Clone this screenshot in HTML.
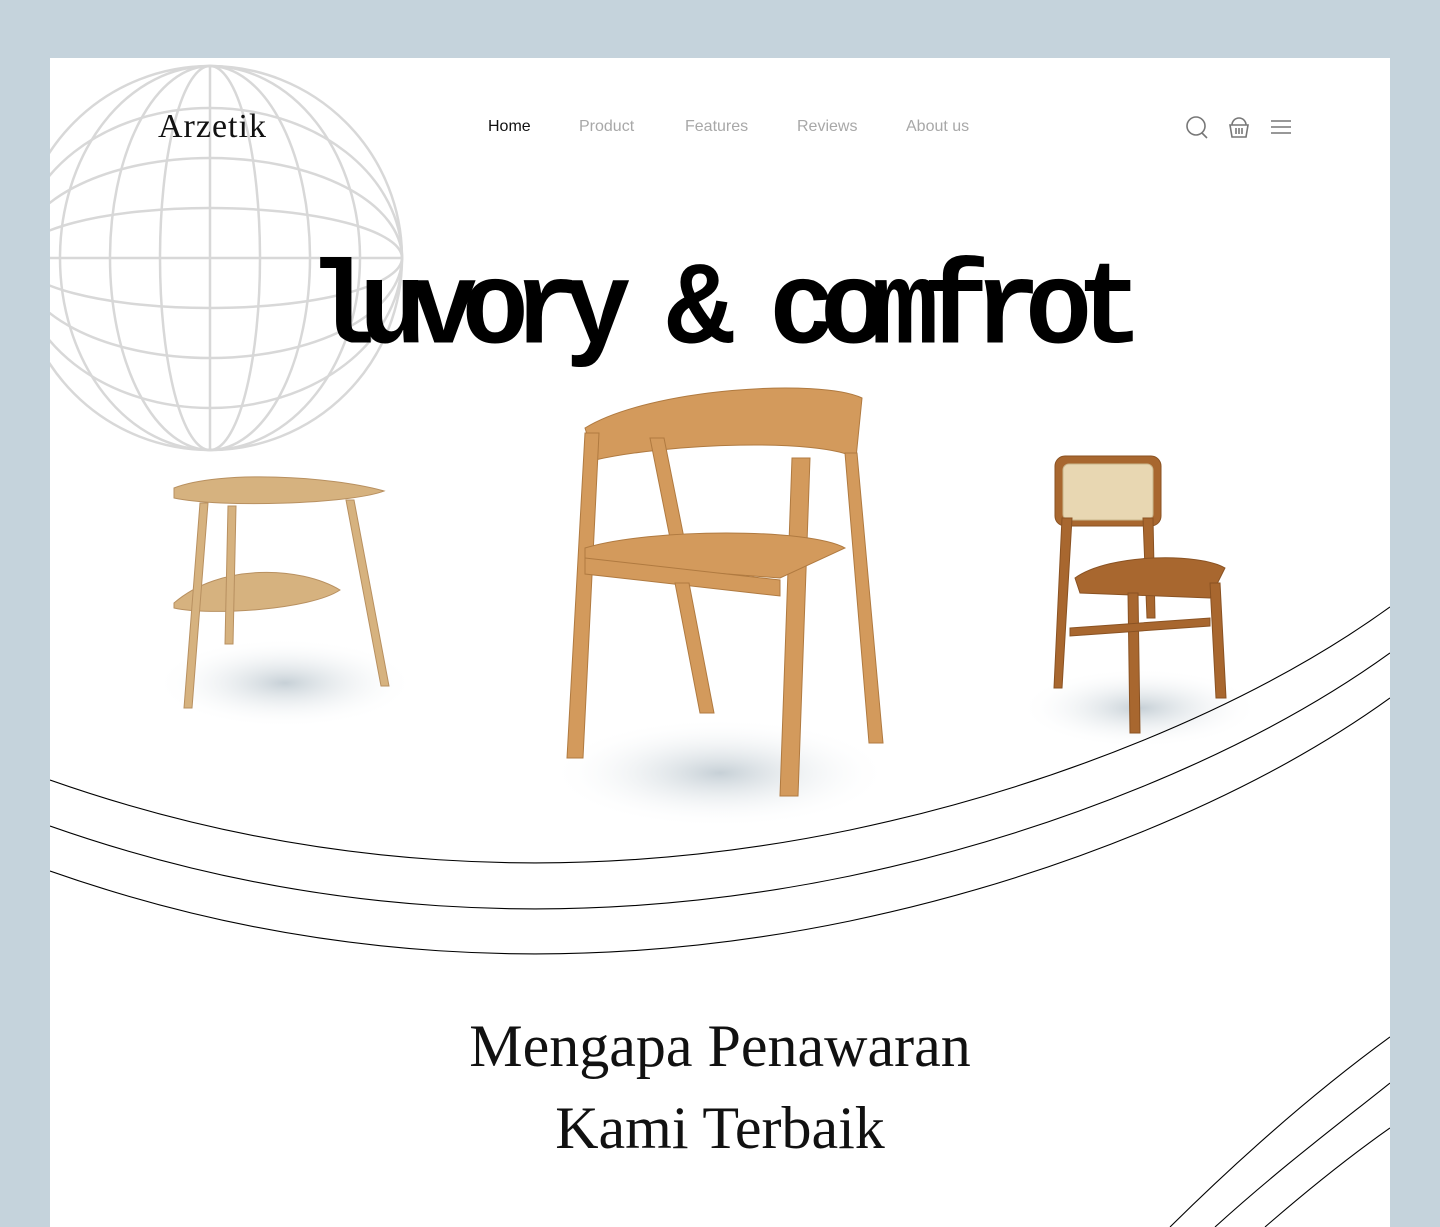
<!DOCTYPE html>
<html><head><meta charset="utf-8"><style>
body{margin:0;background:#c5d3dc;width:1440px;height:1227px;overflow:hidden;font-family:"Liberation Sans",sans-serif}
.card{position:absolute;left:50px;top:58px;width:1340px;height:1169px;background:#fff;overflow:hidden}
.logo{position:absolute;left:108px;top:50px;font-family:"Liberation Serif",serif;font-size:34px;color:#111;letter-spacing:1px}
.nav{position:absolute;top:60px;font-size:16px;color:#a8a8a8}
h1{position:absolute;left:258px;top:190px;margin:0;font-family:"Liberation Mono",monospace;font-weight:bold;font-size:112px;letter-spacing:-16px;color:#000;white-space:nowrap;transform:scaleY(1.05)}
h2{position:absolute;left:0;width:1340px;top:947px;margin:0;text-align:center;font-family:"Liberation Serif",serif;font-weight:normal;font-size:60px;line-height:82px;color:#111}
svg{position:absolute;left:0;top:0}
</style></head><body>
<div class="card">
<svg width="1340" height="1169" viewBox="0 0 1340 1169">
<defs><radialGradient id="sh"><stop offset="0" stop-color="#b8c4cc" stop-opacity=".8"/><stop offset="1" stop-color="#fff" stop-opacity="0"/></radialGradient></defs>
<g fill="none" stroke="#d8d8d8" stroke-width="2.5">
<circle cx="160" cy="200" r="192"/>
<ellipse cx="160" cy="200" rx="150" ry="192"/><ellipse cx="160" cy="200" rx="100" ry="192"/><ellipse cx="160" cy="200" rx="50" ry="192"/>
<ellipse cx="160" cy="200" rx="192" ry="150"/><ellipse cx="160" cy="200" rx="192" ry="100"/><ellipse cx="160" cy="200" rx="192" ry="50"/>
<line x1="-32" y1="200" x2="352" y2="200"/><line x1="160" y1="8" x2="160" y2="392"/>
</g>
<ellipse cx="235" cy="625" rx="130" ry="45" fill="url(#sh)"/>
<ellipse cx="670" cy="715" rx="170" ry="55" fill="url(#sh)"/>
<ellipse cx="1090" cy="650" rx="120" ry="40" fill="url(#sh)"/>
<g fill="#d6b27f" stroke="#b89060" stroke-width="1">
<path d="M124 430 C170 412 280 418 334 433 C300 446 170 450 124 440Z"/>
<path d="M124 545 C170 505 250 508 290 532 C260 552 160 558 124 550Z"/>
<path d="M150 445 l8 0 -16 205 -8 0Z"/><path d="M178 448 l8 0 -3 138 -8 0Z"/><path d="M296 442 l8 0 35 186 -8 0Z"/>
</g>
<g fill="#d39a5c" stroke="#b07a40" stroke-width="1">
<path d="M535 370 C600 330 770 320 812 340 L806 400 C770 380 620 385 545 402Z"/>
<path d="M535 375 l14 0 -16 325 -16 0Z"/><path d="M600 380 l14 0 22 110 -14 0Z"/>
<path d="M742 400 l18 0 -12 338 -18 0Z"/><path d="M795 395 l12 0 26 290 -14 0Z"/>
<path d="M535 490 C600 470 760 470 795 490 L730 520 L535 505Z"/>
<path d="M535 500 l195 22 0 16 -195 -22Z"/>
<path d="M625 525 l14 0 25 130 -14 0Z"/>
</g>
<g fill="#a8672f" stroke="#8a5222" stroke-width="1">
<rect x="1005" y="398" width="106" height="70" rx="10"/>
<rect x="1013" y="406" width="90" height="56" rx="6" fill="#e8d7b2" stroke="#c9b48a"/>
<path d="M1012 460 l10 0 -10 170 -8 0Z"/><path d="M1093 460 l10 0 2 100 -8 0Z"/>
<path d="M1025 520 C1060 495 1150 495 1175 510 L1160 540 L1030 535Z"/>
<path d="M1078 535 l10 0 2 140 -10 0Z"/><path d="M1160 525 l10 0 6 115 -10 0Z"/>
<path d="M1020 570 l140 -10 0 8 -140 10Z"/>
</g>
<g fill="none" stroke="#000" stroke-width="1.1">
<path d="M0 722 C250 810 520 830 800 772 C1000 730 1200 650 1340 549"/>
<path d="M0 768 C250 856 520 876 800 818 C1000 776 1200 696 1340 595"/>
<path d="M0 813 C250 901 520 921 800 863 C1000 821 1200 741 1340 640"/>
<path d="M1120 1169 C1200 1090 1270 1030 1340 979"/>
<path d="M1165 1169 C1230 1110 1290 1065 1340 1025"/>
<path d="M1215 1169 C1260 1130 1300 1098 1340 1070"/>
</g>
<g fill="none" stroke="#777" stroke-width="1.6">
<circle cx="1146" cy="68" r="9"/><line x1="1152" y1="75" x2="1157" y2="80"/>
<path d="M1180 67 h18 l-2 12 h-14z"/><path d="M1182 67 a7 7 0 0 1 14 0"/><path d="M1186 70v6M1189 70v6M1192 70v6"/>
<path d="M1221 63h20M1221 69h20M1221 75h20"/>
</g>
</svg>
<div class="logo">Arzetik</div>
<div class="nav" style="left:438px;color:#111">Home</div>
<div class="nav" style="left:529px">Product</div>
<div class="nav" style="left:635px">Features</div>
<div class="nav" style="left:747px">Reviews</div>
<div class="nav" style="left:856px">About us</div>
<h1>luvory &amp; comfrot</h1>
<h2>Mengapa Penawaran<br>Kami Terbaik</h2>
</div>
</body></html>
